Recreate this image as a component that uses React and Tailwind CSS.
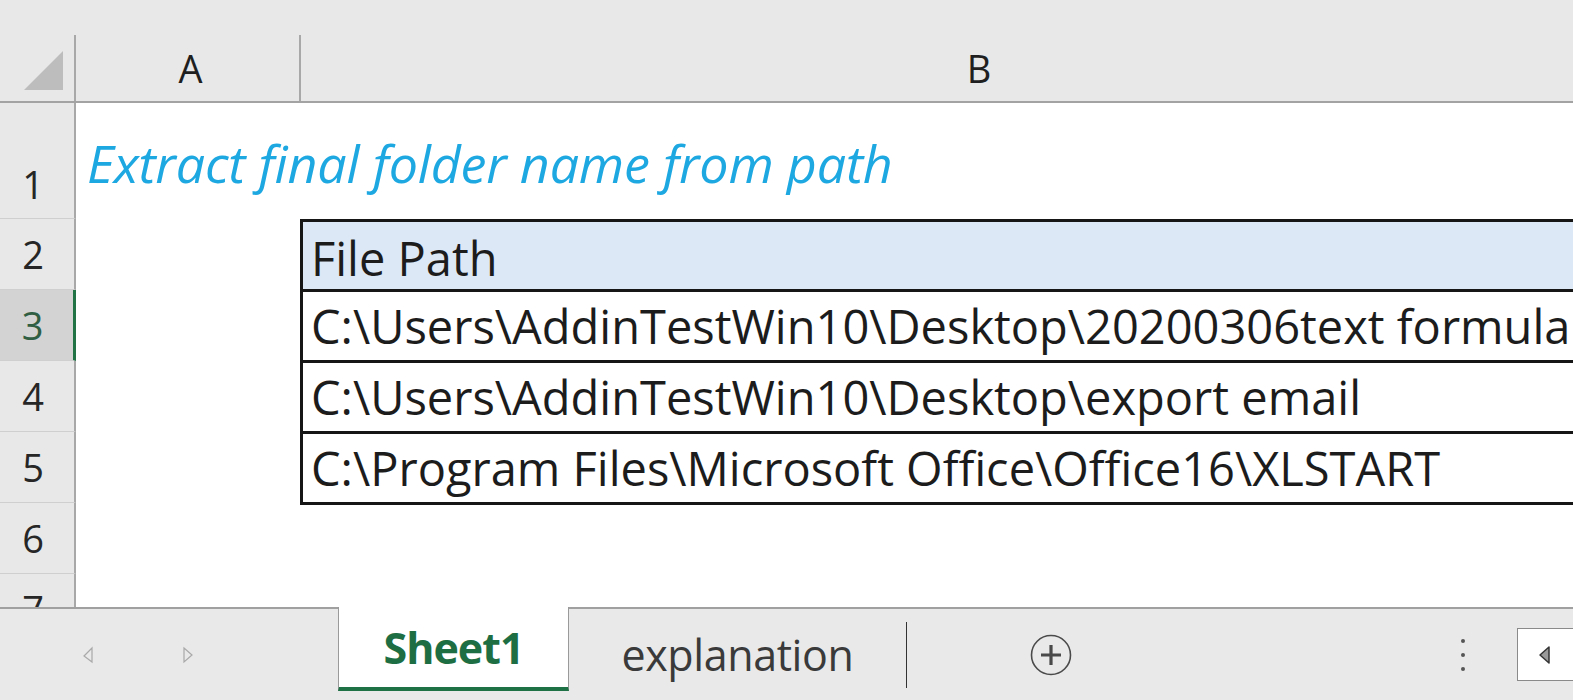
import React from "react";

const rows = [
  "C:\\Users\\AddinTestWin10\\Desktop\\20200306text formula",
  "C:\\Users\\AddinTestWin10\\Desktop\\export email",
  "C:\\Program Files\\Microsoft Office\\Office16\\XLSTART",
];

function RowHead({ n, selected, tall }) {
  if (tall) {
    return (
      <div className="h-[116px] shrink-0 flex items-end justify-center pr-[8px] pb-[15px] border-b border-[#cfcfcf] border-r-2 border-r-[#a8a8a8] text-[38px] leading-none text-[#262626]">
        {n}
      </div>
    );
  }
  return (
    <div
      className={
        selected
          ? "h-[71px] shrink-0 flex items-center justify-center pr-[8px] border-b border-[#cfcfcf] border-r-[3px] border-r-[#217346] bg-[#d3d3d3] text-[38px] leading-none text-[#2f5e43]"
          : "h-[71px] shrink-0 flex items-center justify-center pr-[8px] border-b border-[#cfcfcf] border-r-2 border-r-[#a8a8a8] text-[38px] leading-none text-[#262626]"
      }
    >
      {n}
    </div>
  );
}

export default function App() {
  return (
    <div className="w-[1573px] h-[700px] overflow-hidden bg-white flex flex-col font-['Open_Sans',sans-serif]">
      {/* Column headers */}
      <div className="h-[103px] shrink-0 flex items-end bg-[#e8e8e8] border-b-2 border-[#a3a3a3]">
        <div className="w-[76px] h-[66px] shrink-0 border-r-2 border-[#a8a8a8] relative">
          <svg width="76" height="66" viewBox="0 0 76 66" className="block">
            <polygon points="63,16 63,55 24,55" fill="#bdbdbd" />
          </svg>
        </div>
        <div className="w-[225px] h-[66px] shrink-0 border-r-2 border-[#a8a8a8] flex items-center justify-center text-[38px] leading-none text-[#1f1f1f] pl-[6px]">
          A
        </div>
        <div className="w-[1356px] h-[66px] shrink-0 flex items-center justify-center text-[38px] leading-none text-[#1f1f1f]">
          B
        </div>
      </div>

      {/* Body */}
      <div className="flex-1 flex overflow-hidden">
        <div className="w-[76px] shrink-0 bg-[#e8e8e8] flex flex-col">
          <RowHead n="1" tall />
          <RowHead n="2" />
          <RowHead n="3" selected />
          <RowHead n="4" />
          <RowHead n="5" />
          <RowHead n="6" />
          <RowHead n="7" />
        </div>
        <div className="flex-1 flex flex-col bg-white overflow-hidden">
          <div className="h-[116px] shrink-0 flex items-end pl-[11px] pb-[30px]">
            <span className="italic text-[52px] leading-none text-[#1ea8e2] whitespace-nowrap tracking-[-0.2px]">
              Extract final folder name from path
            </span>
          </div>
          <div className="ml-[224px] w-[1400px] shrink-0 border-t-[3px] border-l-[3px] border-[#161616] text-[47px] text-[#1c1c1c]">
            <div className="h-[70px] flex items-center pl-[8px] bg-[#dde8f6] border-b-[3px] border-[#161616] whitespace-nowrap pt-[6px]">
              File Path
            </div>
            {rows.map((r) => (
              <div
                key={r}
                className="h-[71px] flex items-center pl-[8px] border-b-[3px] border-[#161616] whitespace-nowrap"
              >
                {r}
              </div>
            ))}
          </div>
        </div>
      </div>

      {/* Sheet tab bar */}
      <div className="h-[93px] shrink-0 flex bg-[#e9e9e9] border-t-2 border-[#a0a0a0]">
        <div className="w-[338px] shrink-0 flex items-center">
          <svg width="338" height="30" viewBox="0 0 338 30" className="block">
            <path d="M92 8 L84 16 L92 22 Z" fill="none" stroke="#a9a9a9" strokeWidth="1.2" />
            <path d="M184 8 L192 15 L184 22 Z" fill="none" stroke="#a9a9a9" strokeWidth="1.2" />
          </svg>
        </div>
        <div className="w-[231px] h-[84px] -mt-[2px] shrink-0 bg-white border-l border-r border-[#9a9a9a] border-b-4 border-b-[#1e7145] flex items-center justify-center">
          <span className="font-bold text-[43px] leading-none text-[#1e6e43] tracking-[-1px]">Sheet1</span>
        </div>
        <div className="w-[337px] shrink-0 flex items-center justify-center">
          <span className="text-[43px] leading-none text-[#3a3a3a] tracking-[-0.4px]">explanation</span>
        </div>
        <div className="w-[1px] h-[66px] self-center bg-[#333] shrink-0" />
        <div className="w-[288px] shrink-0 flex items-center justify-center">
          <svg width="42" height="42" viewBox="0 0 42 42" className="block">
            <circle cx="21" cy="21" r="19.5" fill="none" stroke="#4a4a4a" strokeWidth="1.6" />
            <path d="M21 11 V31 M11 21 H31" stroke="#4a4a4a" strokeWidth="3.2" />
          </svg>
        </div>
        <div className="w-[265px] shrink-0" />
        <div className="w-[6px] shrink-0 flex flex-col items-center justify-center gap-[10px]">
          <div className="w-[4px] h-[4px] rounded-full bg-[#555]" />
          <div className="w-[4px] h-[4px] rounded-full bg-[#555]" />
          <div className="w-[4px] h-[4px] rounded-full bg-[#555]" />
        </div>
        <div className="ml-[51px] w-[80px] h-[53px] self-center shrink-0 bg-white border border-[#8a8a8a] flex items-center pl-[20px]">
          <svg width="14" height="20" viewBox="0 0 14 20" className="block">
            <polygon points="11,2 2,10 11,18" fill="#9a9a9a" stroke="#333" strokeWidth="1.5" strokeLinejoin="round" />
          </svg>
        </div>
      </div>
    </div>
  );
}
